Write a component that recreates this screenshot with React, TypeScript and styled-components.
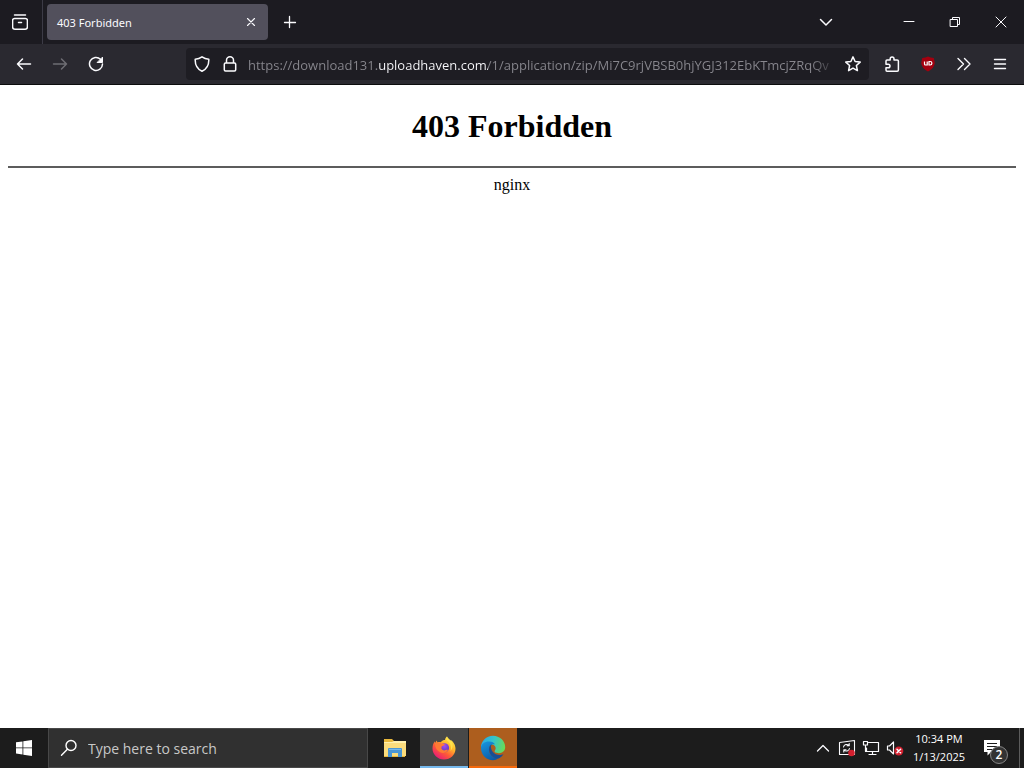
import React from "react";
import styled, { createGlobalStyle } from "styled-components";

const ui = `"Open Sans", "Noto Sans", sans-serif`;

const GlobalStyle = createGlobalStyle`
  *, *::before, *::after { box-sizing: border-box; }
  html, body { margin: 0; height: 100%; }
  #root { height: 100%; }
  button { font: inherit; }
`;

const Desktop = styled.div`
  min-height: 100vh;
  display: flex;
  flex-direction: column;
  background: #fff;
`;

const TitleBar = styled.header`
  height: 44px;
  display: flex;
  align-items: center;
  background: #1c1b21;
  color: #fbfbfe;
  font-family: ${ui};
`;

const IconButton = styled.button<{ $w?: number; $h?: number; $dim?: boolean }>`
  flex: none;
  width: ${(p) => p.$w ?? 36}px;
  height: ${(p) => p.$h ?? 32}px;
  display: flex;
  align-items: center;
  justify-content: center;
  padding: 0;
  border: 0;
  border-radius: 4px;
  background: none;
  color: ${(p) => (p.$dim ? "#6e6d73" : "#fbfbfe")};
`;

const ViewCell = styled.div`
  height: 100%;
  width: 43px;
  display: flex;
  align-items: center;
  padding-left: 2px;
  border-right: 1px solid #3c3b46;
`;

const Tab = styled.div`
  width: 221px;
  height: 36px;
  margin-left: 4px;
  padding: 0 5px 0 10px;
  display: flex;
  align-items: center;
  justify-content: space-between;
  border-radius: 4px;
  background: #52505c;
  line-height: 16px;
`;

const TabTitle = styled.span`
  padding-top: 2px;
  font-family: "Noto Sans", sans-serif;
  font-size: 11px;
`;

const Grow = styled.div`
  flex: 1;
`;

const WindowControls = styled.div`
  display: flex;
  margin-left: 42px;
`;

const NavBar = styled.nav`
  height: 41px;
  display: flex;
  align-items: center;
  padding: 0 6px;
  background: #2a2930;
  border-bottom: 1px solid #0c0c0d;
`;

const Spring = styled.div`
  flex: 0 1 72px;
`;

const AddressBar = styled.div`
  flex: 1;
  min-width: 0;
  height: 32px;
  margin-right: 5px;
  padding: 0 2px;
  display: flex;
  align-items: center;
  border-radius: 4px;
  background: #1e1d23;
`;

const Address = styled.input`
  flex: 1;
  min-width: 0;
  height: 32px;
  margin-left: 4px;
  padding: 2px 0 0;
  border: 0;
  outline: 0;
  color: #96959b;
  font-family: ${ui};
  font-size: 13px;
  background: linear-gradient(
    90deg,
    #88878e 0 131px,
    #fbfbfe 131px 240px,
    #88878e 240px calc(100% - 28px),
    #1e1d23 100%
  );
  -webkit-background-clip: text;
  background-clip: text;
  -webkit-text-fill-color: transparent;
`;

const Page = styled.main`
  flex: 1;
  padding: 0 8px;
  color: #000;
  font-family: "Liberation Serif", serif;
  font-size: 16px;
  text-align: center;
`;

const Heading = styled.h1`
  margin: 23px 0 21px;
  font-size: 32px;
  line-height: 37px;
`;

const Rule = styled.hr`
  height: 2px;
  margin: 0 0 8px;
  border: 0;
  background: #5c5c5c;
`;

const Server = styled.p`
  margin: 0;
  line-height: 18px;
`;

const Taskbar = styled.footer`
  height: 40px;
  display: flex;
  background: #1c1c1c;
  color: #fff;
  font-family: ${ui};
`;

const Search = styled.label`
  flex: 0 1 320px;
  display: flex;
  align-items: center;
  gap: 10px;
  margin-right: 3px;
  padding-left: 11px;
  border: 1px solid #484848;
  background: #303030;
`;

const SearchInput = styled.input`
  flex: 1;
  min-width: 0;
  padding: 0;
  border: 0;
  outline: 0;
  background: none;
  font-family: ${ui};
  font-size: 14px;
  color: #fff;
  &::placeholder {
    color: #c8c8c8;
    opacity: 1;
  }
`;

const AppButton = styled.button<{ $bg?: string; $line?: string }>`
  width: 48px;
  margin-right: 1px;
  padding: 0;
  display: flex;
  align-items: center;
  justify-content: center;
  border: 0;
  background: ${(p) => p.$bg ?? "none"};
  box-shadow: inset 0 -2px 0 ${(p) => p.$line ?? "transparent"};
`;

const Tray = styled.div`
  display: flex;
  align-items: center;
`;

const Clock = styled.time`
  width: 64px;
  font-size: 11px;
  line-height: 18px;
  text-align: center;
  white-space: nowrap;
`;

const ClockLine = styled.span`
  display: block;
`;

const Notifications = styled.button`
  position: relative;
  width: 42px;
  height: 40px;
  display: flex;
  align-items: center;
  justify-content: center;
  padding: 0;
  border: 0;
  background: none;
  color: #fff;
`;

const Badge = styled.span`
  position: absolute;
  right: 5px;
  bottom: 4px;
  width: 18px;
  height: 18px;
  border: 1px solid #858585;
  border-radius: 50%;
  background: #333;
  font-size: 12px;
  font-weight: 600;
  line-height: 16px;
  text-align: center;
`;

const ShowDesktop = styled.button`
  width: 5px;
  height: 40px;
  margin-left: 6px;
  padding: 0;
  border: 0;
  border-left: 1px solid #5c5c5c;
  background: none;
`;

type IconProps = { size?: number; w?: number; children: React.ReactNode };

const Line = ({ size = 16, w = 1.5, children }: IconProps) => (
  <svg
    width={size}
    height={size}
    viewBox={`0 0 ${size} ${size}`}
    fill="none"
    stroke="currentColor"
    strokeWidth={w}
    strokeLinecap="round"
    strokeLinejoin="round"
    aria-hidden="true"
  >
    {children}
  </svg>
);

const FolderIcon = () => (
  <svg width="24" height="24" viewBox="0 0 24 24" aria-hidden="true">
    <path d="M1 3h8l2 2h11v16H1z" fill="#e9b83c" />
    <path d="M1 6h22v14H1z" fill="#fbdc7c" />
    <path d="M1 6h8l2-1h12v2H1z" fill="#fff0b0" />
    <path d="M5 13q0-1 1-1h12q1 0 1 1v8h-4v-4H9v4H5z" fill="#4a96d4" />
    <path d="M6 13h12v1H6z" fill="#78b9e9" />
  </svg>
);

const FirefoxIcon = () => (
  <svg width="24" height="24" viewBox="0 0 24 24" aria-hidden="true">
    <defs>
      <linearGradient id="fox" x1="0.85" y1="0.05" x2="0.2" y2="0.95">
        <stop offset="0" stopColor="#fff04a" />
        <stop offset="0.35" stopColor="#ffb62a" />
        <stop offset="0.65" stopColor="#ff5a36" />
        <stop offset="1" stopColor="#e8187a" />
      </linearGradient>
      <radialGradient id="globe" cx="0.5" cy="0.3" r="0.7">
        <stop offset="0" stopColor="#a14df0" />
        <stop offset="1" stopColor="#5a38b8" />
      </radialGradient>
    </defs>
    <path
      d="M15 .5c.3 2 2 3.400 3.300 4.800.5-.1.4-1 .2-1.500 2.600 1.800 5 5 5 9C23.500 19 18.400 23.500 12 23.500S.5 18.500.5 12.500c0-3 1-5.500 2.200-7.200L3 7l1.700-2.600L5.500 6.500c1-.5 2.200-.5 3.200-.3C10 4.500 11.500 4 13 4c0-1.500 1-2.800 2-3.500z"
      fill="url(#fox)"
    />
    <circle cx="12.500" cy="11.800" r="4.600" fill="url(#globe)" />
    <path d="M3 7.500c2-1.500 4.500-1.200 6.200 0l3.600.4c-.2 1.500-2 2-3 2.400-.6 1.600-.7 3.400 1.500 4 2 .5 3-1 4.800-.3-1.500 2.800-5 3.800-8 2.200C5 14.700 3 12 3 7.500z" fill="#ff7a34" />
    <path d="M14.500 4c3.500 2.500 5.500 6 4 11 2.500-2.500 3-7 .5-10.200-1.500-1.200-3-2.500-4-4.300-.8 1-.9 2.300-.5 3.500z" fill="#ffe14c" />
  </svg>
);

const EdgeIcon = () => (
  <svg width="26" height="26" viewBox="0 0 26 26" aria-hidden="true">
    <defs>
      <linearGradient id="edgeTop" x1="0" y1="0.3" x2="1" y2="0.5">
        <stop offset="0" stopColor="#28a8e8" />
        <stop offset="0.5" stopColor="#36c5c8" />
        <stop offset="1" stopColor="#67dc58" />
      </linearGradient>
      <linearGradient id="edgeLow" x1="0.2" y1="0" x2="0.7" y2="1">
        <stop offset="0" stopColor="#1693dc" />
        <stop offset="1" stopColor="#0c59a5" />
      </linearGradient>
    </defs>
    <path d="M1 12.500C1 6 6.300.8 13 .8S25.200 6 25.200 12c0 4-3 6.200-6.300 6.200-3.500 0-5-1.200-4-2.600 2.200-3.200-.5-6.300-4-6.300C5.500 9.300 1 12 1 12.500z" fill="url(#edgeTop)" />
    <path d="M1 13c0-4 4-6.800 8.500-6.500 2.500.2 4.500 1.200 5.500 2.800-3.500-.8-6 1.500-6 5 0 5 4 9.500 9.500 9-1.500 1.200-3.500 1.900-5.500 1.900C6.300 25.200 1 20 1 13z" fill="url(#edgeLow)" />
    <path d="M9 14.300c0-2.500 1.200-4.200 2.800-5-1 1.200-1 3-.6 4.500.9 3.700 4.400 6.200 8.200 6.200 1.500 0 3-.4 4.100-1-1.200 2.300-2.900 3.800-5 4.500C13 24 9 19.500 9 14.300z" fill="#174f96" />
  </svg>
);

export default function App() {
  return (
    <Desktop>
      <GlobalStyle />
      <TitleBar>
        <ViewCell>
          <IconButton aria-label="Firefox View">
            <Line>
              <path d="M2.500 1h11M2.600 4.500h10.800q2 0 2 2v6.500q0 2.200-2.200 2.200H2.800Q.6 15.200.6 13V6.500q0-2 2-2zM6.500 8.500h3" />
            </Line>
          </IconButton>
        </ViewCell>
        <Tab>
          <TabTitle>403 Forbidden</TabTitle>
          <IconButton $w={24} $h={24} aria-label="Close tab">
            <Line size={10} w={1.1}>
              <path d="M1.500 1.500l7 7M8.500 1.500l-7 7" />
            </Line>
          </IconButton>
        </Tab>
        <IconButton $w={44} aria-label="New tab">
          <Line size={14} w={1.3}>
            <path d="M6.500 1.500v11M1.500 7.500h11" />
          </Line>
        </IconButton>
        <Grow />
        <IconButton aria-label="List all tabs">
          <Line size={14}>
            <path d="M1.500 4.500L7 10l5.500-5.500" />
          </Line>
        </IconButton>
        <WindowControls>
          <IconButton $w={46} aria-label="Minimize">
            <Line size={12} w={1}>
              <path d="M1 5.500h10" />
            </Line>
          </IconButton>
          <IconButton $w={46} aria-label="Restore">
            <Line size={12} w={1}>
              <path d="M1.500 3.500h7v7h-7zM3.500 3.500v-2h7v7h-2" />
            </Line>
          </IconButton>
          <IconButton $w={46} aria-label="Close">
            <Line size={12} w={1}>
              <path d="M1 1l10 10M11 1L1 11" />
            </Line>
          </IconButton>
        </WindowControls>
      </TitleBar>

      <NavBar>
        <IconButton aria-label="Back">
          <Line>
            <path d="M14.500 8H1.500M6.500 3L1.500 8l5 5" />
          </Line>
        </IconButton>
        <IconButton $dim aria-label="Forward">
          <Line>
            <path d="M1.500 8h13M9.500 3l5 5-5 5" />
          </Line>
        </IconButton>
        <IconButton aria-label="Reload">
          <Line>
            <path d="M12.500 3.200A6.500 6.500 0 1 0 14.500 8" />
            <path d="M14.500 1.500v5H9.500z" fill="currentColor" strokeWidth="1" />
          </Line>
        </IconButton>
        <Spring />
        <AddressBar>
          <IconButton $w={28} aria-label="Tracking protection">
            <Line>
              <path d="M8 .8c2 1.500 4.300 2.300 6.800 2.500.2 5.500-1.800 9.700-6.800 12C3 13 1 8.800 1.200 3.300 3.700 3.100 6 2.300 8 .8z" />
            </Line>
          </IconButton>
          <IconButton $w={28} aria-label="Site information">
            <Line>
              <path d="M3.500 7h9q1.200 0 1.200 1.200v5.600q0 1.200-1.200 1.200h-9q-1.200 0-1.200-1.200V8.200Q2.300 7 3.500 7zM4.500 7V4.300a3.500 3.500 0 0 1 7 0V7" />
            </Line>
          </IconButton>
          <Address
            type="text"
            aria-label="Address"
            defaultValue="https://download131.uploadhaven.com/1/application/zip/Mi7C9rjVBSB0hjYGJ312EbKTmcjZRqQv"
          />
          <IconButton $w={28} aria-label="Bookmark this page">
            <Line>
              <path d="M8 .9l2.100 4.600 5.100.6-3.800 3.400 1 5.100L8 12.100l-4.400 2.500 1-5.100L.8 6.100l5.100-.6z" />
            </Line>
          </IconButton>
        </AddressBar>
        <IconButton aria-label="Extensions">
          <Line>
            <path d="M2 7.200V5q0-1 1-1h3.200V2.800a1.900 1.900 0 0 1 3.800 0V4h3.200q1.200 0 1.200 1v9q0 1.200-1.200 1.200H3q-1 0-1-1.200v-2.200h2.200a1.800 1.800 0 0 0 0-3.600H2z" />
          </Line>
        </IconButton>
        <IconButton aria-label="uBlock Origin">
          <svg width="16" height="16" viewBox="0 0 16 16" fill="none" aria-hidden="true">
            <path d="M8 .5q2.500 1.300 5.800 1.500l1 5q-.3 5-6.800 8.500Q1.500 12 1.200 7l1-5Q5.500 1.800 8 .5z" fill="#a3000f" />
            <path d="M4.500 5.500V8q0 1 1 1h1.700V5.500M9 5.500h1.200q1.700 0 1.700 1.700T10.200 9H9z" stroke="#fff" strokeWidth="1.200" />
          </svg>
        </IconButton>
        <IconButton aria-label="More tools">
          <Line w={1.4}>
            <path d="M2 2.500L7.500 8 2 13.500M8.500 2.500L14 8l-5.500 5.500" />
          </Line>
        </IconButton>
        <IconButton aria-label="Open application menu">
          <Line w={1.4}>
            <path d="M2.500 3.500h11M2.500 8h11M2.500 12.500h11" />
          </Line>
        </IconButton>
      </NavBar>

      <Page>
        <Heading>403 Forbidden</Heading>
        <Rule />
        <Server>nginx</Server>
      </Page>

      <Taskbar>
        <IconButton $w={48} $h={40} aria-label="Start">
          <svg width="16" height="16" viewBox="0 0 16 16" fill="#fff" aria-hidden="true">
            <path d="M0 2.300l6.500-.9v6.100H0zM7.300 1.300L16 0v7.500H7.300zM0 8.300h6.500v6.200L0 13.600zM7.300 8.300H16V16l-8.700-1.300z" />
          </svg>
        </IconButton>
        <Search>
          <Line size={18} w={1.4}>
            <circle cx="11" cy="6.500" r="5" />
            <path d="M7.400 10.200L1.500 16.200" />
          </Line>
          <SearchInput type="text" aria-label="Search" placeholder="Type here to search" />
        </Search>
        <AppButton aria-label="File Explorer">
          <FolderIcon />
        </AppButton>
        <AppButton $bg="#484848" $line="#76b9ed" aria-label="Firefox">
          <FirefoxIcon />
        </AppButton>
        <AppButton $bg="#ad5e1e" $line="#f5690c" aria-label="Microsoft Edge">
          <EdgeIcon />
        </AppButton>
        <Grow />
        <Tray>
          <IconButton $w={24} aria-label="Show hidden icons">
            <Line size={14} w={1.3}>
              <path d="M1.500 10L7 4.500l5.500 5.500" />
            </Line>
          </IconButton>
          <IconButton $w={24} aria-label="Windows Update">
            <Line size={18} w={1.1}>
              <path d="M1.500 3.500L16.500 1.500v14h-15z" />
              <path d="M5.500 8a3.200 3.200 0 0 1 5.500-1.500M11.200 4.500v2.200H9M11.500 9.500A3.200 3.200 0 0 1 6 11M5.800 13v-2.200H8" />
              <circle cx="13.500" cy="14" r="3.300" fill="#d3202f" stroke="none" />
            </Line>
          </IconButton>
          <IconButton $w={24} aria-label="Network">
            <Line size={18} w={1.2}>
              <path d="M6.500 3.500H16.500v9h-12V9M10.500 12.500v3M7 15.500h7M1.500 2.500h4v3.500h-4zM3.500 6v6.500h1" />
            </Line>
          </IconButton>
          <IconButton $w={24} aria-label="Volume muted">
            <Line size={18} w={1.2}>
              <path d="M1.500 7h2l4-4v12l-4-4h-2z" />
              <circle cx="12.800" cy="12" r="4.500" fill="#d3202f" stroke="none" />
              <path d="M11 10.200l3.600 3.600M14.600 10.200L11 13.800" strokeWidth="1.500" />
            </Line>
          </IconButton>
          <Clock>
            <ClockLine>10:34 PM</ClockLine>
            <ClockLine>1/13/2025</ClockLine>
          </Clock>
          <Notifications aria-label="Notifications, 2 new">
            <svg width="18" height="18" viewBox="0 0 18 18" aria-hidden="true">
              <path d="M1 1h16v12H8l-3.500 3.500V13H1z" fill="#fff" />
              <path d="M4 4.500h10M4 7.500h10M4 10.500h6" stroke="#1c1c1c" />
            </svg>
            <Badge>2</Badge>
          </Notifications>
          <ShowDesktop aria-label="Show desktop" />
        </Tray>
      </Taskbar>
    </Desktop>
  );
}
